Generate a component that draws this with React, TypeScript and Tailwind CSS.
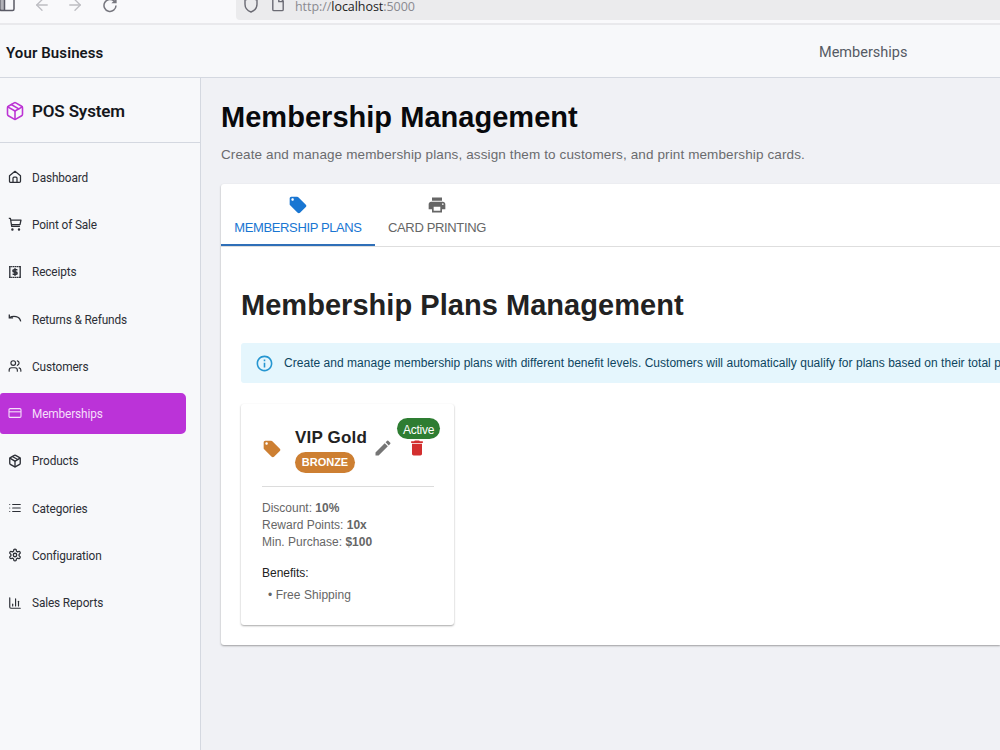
import * as React from 'react';
import clsx from 'clsx';
import { ArrowLeft, ArrowRight, Package } from 'lucide-react';
import {
  LuChartColumn,
  LuList,
  LuPackage,
  LuSettings,
  LuUsers,
} from 'react-icons/lu';
import { MdDelete, MdEdit, MdLocalOffer, MdOutlineInfo, MdPrint } from 'react-icons/md';

const HomeIcon = () => (
  <svg viewBox="0 0 14 14" className="w-3.5 h-3.5" fill="none" stroke="currentColor" strokeWidth="1.25" strokeLinejoin="round">
    <path d="M1.5 5.8 7 1.3l5.5 4.5v5.4a1.2 1.2 0 0 1-1.2 1.2H2.7a1.2 1.2 0 0 1-1.2-1.2z" />
    <path d="M5 12.3V8.2a1 1 0 0 1 1-1h2a1 1 0 0 1 1 1v4.1" />
  </svg>
);

const CartIcon = () => (
  <svg viewBox="0 0 14 14" className="w-3.5 h-3.5" fill="none" stroke="currentColor" strokeWidth="1.25" strokeLinejoin="round">
    <path d="M.8 1.4h1.6l1.3 8h8.2M2.8 3h10.2l-1 4.6H3.6" />
    <circle cx="4.4" cy="12.4" r="0.6" />
    <circle cx="11" cy="12.4" r="0.6" />
  </svg>
);

const ReceiptIcon = () => (
  <svg viewBox="0 0 14 14" className="w-3.5 h-3.5" fill="none" stroke="currentColor">
    <path d="M1.8 1v12M12.2 1v12" strokeWidth="1.3" />
    <path d="M1.2 1.6h11.6M1.2 12.4h11.6" strokeWidth="1.4" strokeDasharray="1.5 .4" />
    <path d="M9.4 4.7H6.1a1.1 1.1 0 0 0 0 2.3h1.8a1.1 1.1 0 0 1 0 2.3H4.6M7 3.2v7.6" strokeWidth="1.6" />
  </svg>
);

const ReturnIcon = () => (
  <svg viewBox="0 0 14 14" className="w-3.5 h-3.5" fill="none" stroke="currentColor" strokeWidth="1.3">
    <path d="M1.6 5.6C5 3.4 11.8 3.8 12.7 9.4" />
    <path d="M1.3 2.4v3.5h3.8" />
  </svg>
);

const CardIcon = () => (
  <svg viewBox="0 0 14 14" className="w-3.5 h-3.5" fill="none" stroke="currentColor" strokeWidth="1.1">
    <rect x="1" y="2.6" width="12" height="8.8" rx="1.2" />
    <path d="M1 5.8h12" />
  </svg>
);

const navItems: { label: string; icon: React.ReactNode }[] = [
  { label: 'Dashboard', icon: <HomeIcon /> },
  { label: 'Point of Sale', icon: <CartIcon /> },
  { label: 'Receipts', icon: <ReceiptIcon /> },
  { label: 'Returns & Refunds', icon: <ReturnIcon /> },
  { label: 'Customers', icon: <LuUsers size={14} /> },
  { label: 'Memberships', icon: <CardIcon /> },
  { label: 'Products', icon: <LuPackage size={14} strokeWidth={2.3} /> },
  { label: 'Categories', icon: <LuList size={14} /> },
  { label: 'Configuration', icon: <LuSettings size={14} strokeWidth={2.2} /> },
  { label: 'Sales Reports', icon: <LuChartColumn size={14} /> },
];

const BrowserBar = () => (
  <div className="flex h-[25px] shrink-0 items-start overflow-hidden border-b-2 border-[#e9e9ec] bg-[#f9f9fb]">
    <div className="-mt-[4px] flex w-[236px] shrink-0 items-center">
      <svg viewBox="0 0 16 16" className="-ml-px h-4 w-4 text-[#5b5b66]" fill="none" stroke="currentColor" strokeWidth="1.5">
        <rect x="1" y="1" width="14" height="12.6" rx="1.5" />
        <path d="M2 2h3v11H2z" fill="currentColor" fillOpacity=".45" stroke="none" />
        <path d="M5.5 1v12.5" />
      </svg>
      <ArrowLeft size={18} strokeWidth={1.7} className="ml-[18px] text-[#bdbdc2]" />
      <ArrowRight size={18} strokeWidth={1.7} className="ml-[15px] text-[#bdbdc2]" />
      <svg viewBox="0 0 16 16" className="ml-[18px] h-4 w-4 text-[#77777f]" fill="none" stroke="currentColor" strokeWidth="1.5">
        <path d="M14 8.5A6 6 0 1 1 12 4" />
        <path d="M14.6 1v5.2H9.4z" fill="currentColor" stroke="none" />
      </svg>
    </div>
    <div className="flex h-5 flex-1 items-start rounded-bl bg-[#ebebed] pl-[7px] text-[#6b6b74]">
      <svg viewBox="0 0 16 16" className="-mt-[3px] h-4 w-4" fill="none" stroke="currentColor" strokeWidth="1.4">
        <path d="M8 1 14 3v4.2c0 3.6-2.4 6.4-6 7.8-3.6-1.4-6-4.2-6-7.8V3z" />
      </svg>
      <svg viewBox="0 0 14 16" className="-mt-[4px] ml-[12px] h-4 w-3.5" fill="none" stroke="currentColor" strokeWidth="1.4">
        <path d="M1.8 1h6.4l4 4v8.4a1.2 1.2 0 0 1-1.2 1.2H3a1.2 1.2 0 0 1-1.2-1.2z" />
        <path d="M7.8 1v4.6h4.4" />
      </svg>
      <span className="ml-[10px] h-3 font-['Open_Sans',sans-serif] text-[12.5px] leading-[13px] tracking-[-0.05px] text-[#8a8a90]">
        http://<span className="text-[#222]">localhost</span>:5000
      </span>
    </div>
  </div>
);

const Sidebar = () => (
  <aside className="flex w-[201px] shrink-0 flex-col border-r border-[#d4d8e0] bg-[#f7f8fa]">
    <div className="flex h-[65px] items-center border-b border-[#d4d8e0] pt-0.5 pl-[5px]">
      <Package size={20} strokeWidth={1.9} className="text-[#bc34d4]" />
      <span className="ml-[7px] pt-0.5 text-[17px] font-semibold tracking-[-0.15px] text-[#15171c]">POS System</span>
    </div>
    <nav className="flex flex-col gap-[7px] pt-[14px] pr-[14px]">
      {navItems.map(({ label, icon }) => (
        <div
          key={label}
          className={clsx(
            'flex h-[40.28px] items-center rounded-r-[5px] rounded-l-[3px] pl-2 text-[13px]',
            label === 'Memberships' ? 'bg-[#bb33d8] text-[#f5dffa]' : 'text-[#2c2f36]'
          )}
        >
          {icon}
          <span className="ml-[10px] origin-left scale-x-[0.91] pt-px tracking-[-0.15px] whitespace-nowrap">{label}</span>
        </div>
      ))}
    </nav>
  </aside>
);

const PlanCard = () => (
  <div className="mt-[21px] flex h-[221px] w-[213px] flex-col rounded-[3px] bg-white px-5 shadow-[0_1px_2px_rgba(0,0,0,0.35)]">
    <div className="ml-px flex h-[83px] shrink-0 border-b border-[#dcdcdc]">
      <MdLocalOffer size={20} className="mt-[35px] shrink-0 text-[#cd7f32]" />
      <div className="mt-[21px] ml-[13px] w-[73px] shrink-0">
        <div className="text-[17px] leading-[25px] font-bold tracking-[0.2px] whitespace-nowrap text-[#222]">VIP Gold</div>
        <div className="mt-[2px] flex h-[21px] w-[60px] items-center justify-center rounded-full bg-[#cd7f32] text-[11px] font-bold text-white">
          BRONZE
        </div>
      </div>
      <MdEdit size={20} className="mt-[34px] ml-[5px] shrink-0 text-[#757575]" />
      <div className="mt-[14px] ml-[4px] flex w-[43px] shrink-0 flex-col items-center">
        <div className="flex h-[21px] w-[43px] items-center justify-center rounded-full bg-[#2e7d32] pt-[2px] text-[12px] tracking-[-0.25px] text-white">Active</div>
        <MdDelete size={20} className="-mt-px -ml-1 text-[#d32f2f]" />
      </div>
    </div>
    <div className="mt-[13px] ml-px text-xs leading-[17px] text-[#666]">
      <p>Discount: <b>10%</b></p>
      <p>Reward Points: <b>10x</b></p>
      <p>Min. Purchase: <b>$100</b></p>
    </div>
    <div className="mt-[14px] ml-px text-xs leading-[17px] text-[#222]">Benefits:</div>
    <div className="mt-[5px] pl-[7px] text-xs leading-[17px] tracking-[0.05px] text-[#666]">• Free Shipping</div>
  </div>
);

export default function App() {
  return (
    <div className="flex h-[750px] w-[1000px] flex-col overflow-hidden bg-[#f0f1f5] font-[Roboto,sans-serif]">
      <BrowserBar />
      <header className="flex h-[53px] shrink-0 items-center border-b border-[#d4d8e0] bg-[#f7f8fa] pt-1">
        <span className="w-[813px] pl-[6px] text-[15px] font-semibold tracking-[0.1px] text-[#15171c]">Your Business</span>
        <span className="pl-[6px] text-[14.5px] text-[#555a64]">Memberships</span>
      </header>
      <div className="flex min-h-0 flex-1">
        <Sidebar />
        <main className="min-w-0 flex-1 pl-5 font-['Liberation_Sans',Arial,sans-serif]">
          <h1 className="mt-[21px] text-[29px] leading-[36px] font-bold tracking-[0.03px] whitespace-nowrap text-[#08090c]">Membership Management</h1>
          <p className="mt-[10px] text-[13.5px] leading-5 tracking-[0.12px] whitespace-nowrap text-[#6a6b6e]">
            Create and manage membership plans, assign them to customers, and print membership cards.
          </p>
          <section className="mt-[19px] h-[461px] rounded-l-[3px] bg-white shadow-[0_1px_2px_rgba(0,0,0,0.35)]">
            <div className="flex h-[63px] border-b border-[#dedede] text-[13px]">
              <div className="-mb-px flex h-[62px] w-[154px] flex-col items-center border-b-2 border-[#2f6fb8] pt-[11px] text-[#1976d2]">
                <MdLocalOffer size={20} />
                <span className="mt-[3px] leading-5 tracking-[-0.38px] whitespace-nowrap">MEMBERSHIP PLANS</span>
              </div>
              <div className="flex w-[124px] flex-col items-center pt-[11px] text-[#666]">
                <MdPrint size={20} />
                <span className="mt-[3px] leading-5 tracking-[-0.35px] whitespace-nowrap">CARD PRINTING</span>
              </div>
            </div>
            <div className="pt-[40px] pl-5">
              <h2 className="text-[29px] leading-[36px] font-bold tracking-[0.04px] whitespace-nowrap text-[#222]">Membership Plans Management</h2>
              <div className="mt-[20px] flex h-10 items-center overflow-hidden rounded-l-[3px] bg-[#e5f6fd] pl-[14px] text-xs tracking-[0.03px] whitespace-nowrap text-[#0d4560]">
                <MdOutlineInfo size={19} className="shrink-0 text-[#2596d1]" />
                <span className="ml-[10px]">
                  Create and manage membership plans with different benefit levels. Customers will automatically qualify for plans based on their total purchases.
                </span>
              </div>
              <PlanCard />
            </div>
          </section>
        </main>
      </div>
    </div>
  );
}
